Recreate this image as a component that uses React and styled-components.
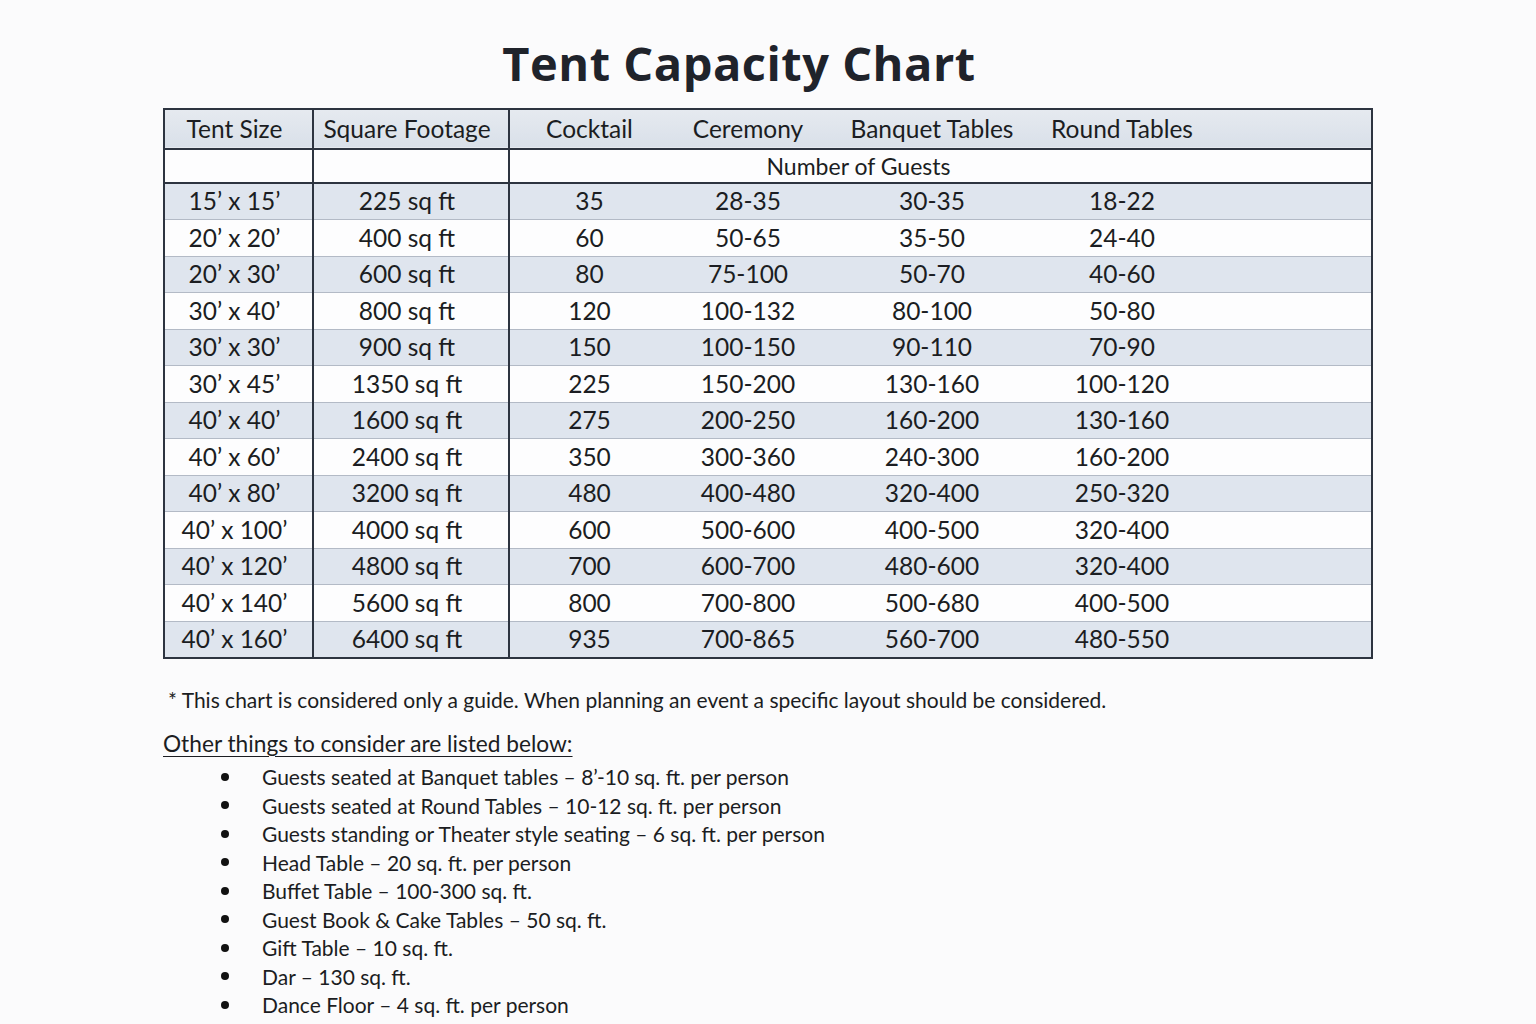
import React from 'react';
import styled, { createGlobalStyle } from 'styled-components';

const GlobalStyle = createGlobalStyle`
  body {
    margin: 0;
    background: #fbfbfc;
    font-family: Lato, "Liberation Sans", sans-serif;
    color: #1b1d22;
  }
`;

const Page = styled.div`
  width: 1536px;
  height: 1024px;
  box-sizing: border-box;
  padding: 36px 0 0 163px;
  overflow: hidden;
`;

const Title = styled.h1`
  width: 1208px;
  margin: 0 0 17px;
  padding-right: 56px;
  box-sizing: border-box;
  text-align: center;
  font-family: "Open Sans", Lato, sans-serif;
  font-size: 47px;
  font-weight: 700;
  line-height: 55px;
  color: #1f232b;
  letter-spacing: 0.5px;
`;

const Table = styled.table`
  width: 1208px;
  border-collapse: collapse;
  table-layout: fixed;
  border: 2px solid #2d3440;
  font-size: 24.5px;
`;

const HeadRow = styled.tr`
  height: 40px;
  background: linear-gradient(#e6eaf0, #d9e0e9);
  border-bottom: 2px solid #2d3440;
`;

const SubRow = styled.tr`
  height: 34px;
  background: #fdfdfe;
  border-bottom: 2px solid #2d3440;
`;

const DataRow = styled.tr`
  height: 36.5px;
  background: ${(p) => (p.$shade ? '#dfe5ee' : '#fdfdfe')};
  border-bottom: 1px solid #b3bac6;
`;

const Cell = styled.td`
  padding: 0 ${(p) => (p.$divider ? '8px' : '0')} 0 0;
  text-align: center;
  font-weight: 400;
  line-height: 1;
  border-right: ${(p) => (p.$divider ? '2px solid #2d3440' : 'none')};
  color: #1b1d22;
`;

const Guests = styled.td`
  padding: 0;
  text-align: center;
  font-size: 23px;
`;

const Note = styled.p`
  margin: 28px 0 0 5px;
  font-size: 21px;
  color: #1b1d22;
`;

const ListTitle = styled.h2`
  display: inline-block;
  margin: 18px 0 6px;
  font-size: 22.7px;
  font-weight: 400;
  text-decoration: underline;
  text-underline-offset: 4px;
  text-decoration-thickness: 1px;
  color: #1b1d22;
`;

const List = styled.ul`
  list-style: none;
  margin: 0;
  padding: 0 0 0 58px;
`;

const Item = styled.li`
  display: flex;
  align-items: center;
  height: 28.5px;
  font-size: 21px;
  color: #1b1d22;

  &::before {
    content: '';
    width: 8px;
    height: 8px;
    border-radius: 50%;
    background: #111;
    margin-right: 33px;
    flex-shrink: 0;
  }
`;

const widths = [149, 196, 160, 158, 210, 170, 165];

const rows = [
  ['15’ x 15’', '225 sq ft', '35', '28-35', '30-35', '18-22'],
  ['20’ x 20’', '400 sq ft', '60', '50-65', '35-50', '24-40'],
  ['20’ x 30’', '600 sq ft', '80', '75-100', '50-70', '40-60'],
  ['30’ x 40’', '800 sq ft', '120', '100-132', '80-100', '50-80'],
  ['30’ x 30’', '900 sq ft', '150', '100-150', '90-110', '70-90'],
  ['30’ x 45’', '1350 sq ft', '225', '150-200', '130-160', '100-120'],
  ['40’ x 40’', '1600 sq ft', '275', '200-250', '160-200', '130-160'],
  ['40’ x 60’', '2400 sq ft', '350', '300-360', '240-300', '160-200'],
  ['40’ x 80’', '3200 sq ft', '480', '400-480', '320-400', '250-320'],
  ['40’ x 100’', '4000 sq ft', '600', '500-600', '400-500', '320-400'],
  ['40’ x 120’', '4800 sq ft', '700', '600-700', '480-600', '320-400'],
  ['40’ x 140’', '5600 sq ft', '800', '700-800', '500-680', '400-500'],
  ['40’ x 160’', '6400 sq ft', '935', '700-865', '560-700', '480-550'],
];

const extras = [
  'Guests seated at Banquet tables – 8’-10 sq. ft. per person',
  'Guests seated at Round Tables – 10-12 sq. ft. per person',
  'Guests standing or Theater style seating – 6 sq. ft. per person',
  'Head Table – 20 sq. ft. per person',
  'Buffet Table – 100-300 sq. ft.',
  'Guest Book & Cake Tables – 50 sq. ft.',
  'Gift Table – 10 sq. ft.',
  'Dar – 130 sq. ft.',
  'Dance Floor – 4 sq. ft. per person',
];

const headers = ['Tent Size', 'Square Footage', 'Cocktail', 'Ceremony', 'Banquet Tables', 'Round Tables', ''];

export default function App() {
  return (
    <>
      <GlobalStyle />
      <Page>
        <Title>Tent Capacity Chart</Title>
        <Table>
          <colgroup>
            {widths.map((w, i) => (
              <col key={i} style={{ width: w }} />
            ))}
          </colgroup>
          <thead>
            <HeadRow>
              {headers.map((h, i) => (
                <Cell as="th" key={i} $divider={i < 2}>
                  {h}
                </Cell>
              ))}
            </HeadRow>
          </thead>
          <tbody>
            <SubRow>
              <Cell $divider />
              <Cell $divider />
              <Guests colSpan={4}>Number of Guests</Guests>
              <Cell />
            </SubRow>
            {rows.map((r, idx) => (
              <DataRow key={idx} $shade={idx % 2 === 0}>
                {r.map((v, i) => (
                  <Cell key={i} $divider={i < 2}>
                    {v}
                  </Cell>
                ))}
                <Cell />
              </DataRow>
            ))}
          </tbody>
        </Table>
        <Note>* This chart is considered only a guide. When planning an event a specific layout should be considered.</Note>
        <ListTitle>Other things to consider are listed below:</ListTitle>
        <List>
          {extras.map((t) => (
            <Item key={t}>{t}</Item>
          ))}
        </List>
      </Page>
    </>
  );
}
